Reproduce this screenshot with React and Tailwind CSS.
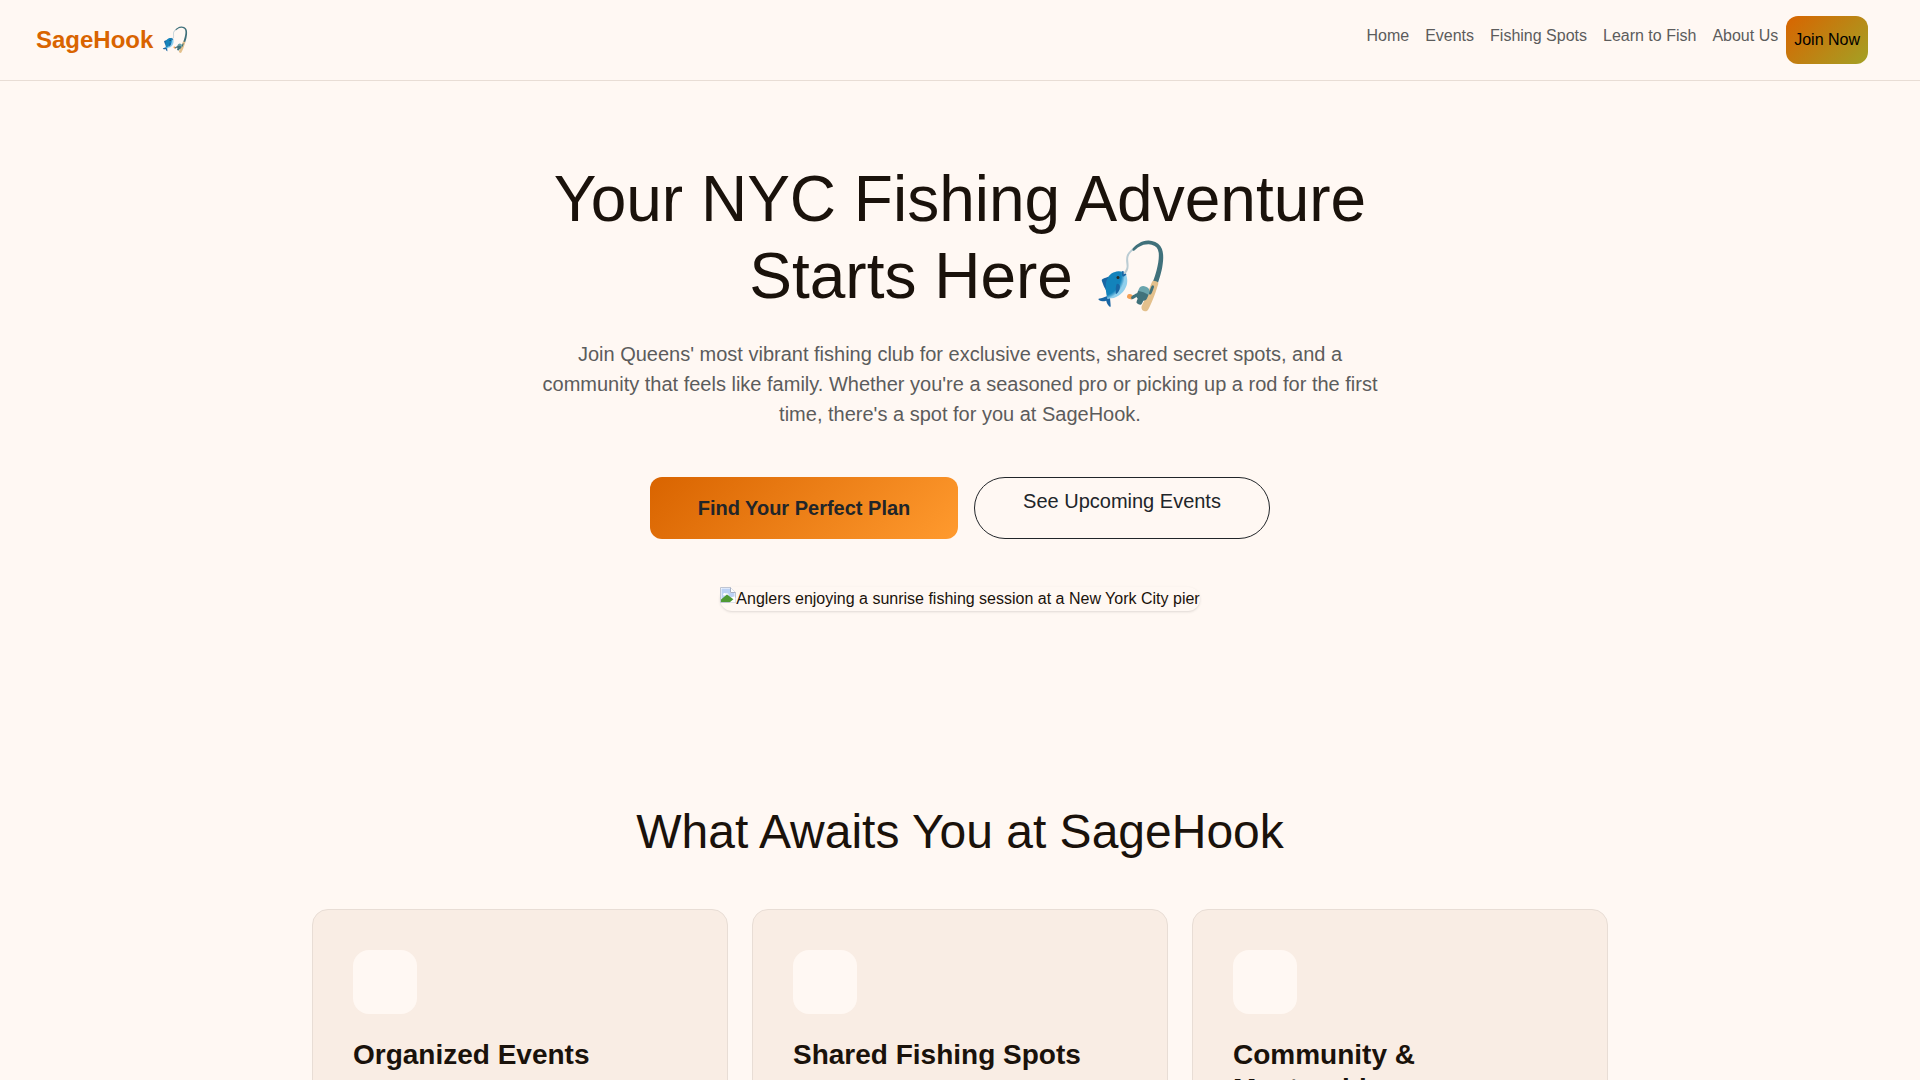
const FONT = "font-['Liberation_Sans',Arial,sans-serif]";

// chrome's broken image placeholder
function BrokenImage() {
  return (
    <svg width="16" height="16" viewBox="0 0 16 16" className="inline-block align-top">
      <path d="M0.5 0.5H10.5L15.5 5.5V15.5H0.5Z" fill="#fff" stroke="#bfc5d2" />
      <path d="M1.5 1.5H10V6H14.5V9.5L1.5 12Z" fill="#bcd2f5" />
      <path d="M3 7.5C3 6 5 5.5 6 6.5C7.5 6 9 7 8.5 8.5H3.5Z" fill="#fff" />
      <path d="M1 15V12.5L7 7.5L11 10.5L15 13.5V15Z" fill="#4f9a35" />
      <path d="M9.5 15.5L15.5 10.5V15.5Z" fill="#fff" />
      <path d="M10.5 0.5V5.5H15.5" fill="#fff" stroke="#a9b1c2" />
    </svg>
  );
}

const features = ["Organized Events", "Shared Fishing Spots", "Community & Mentorship"];

export default function App() {
  return (
    <div className={`${FONT} h-screen overflow-hidden bg-[#fff8f3] text-[#1a120b]`}>
      <nav className="flex items-start justify-between border-b border-[#e8ddd5] pl-9 pr-[52px] pt-4 h-[81px]">
        <div className="flex items-center h-12 text-2xl font-bold text-[#d96400]">SageHook 🎣</div>
        <ul className="flex items-start gap-4 text-base text-[#5c5c5c]">
          <li><a className="block py-2">Home</a></li>
          <li><a className="block py-2">Events</a></li>
          <li><a className="block py-2">Fishing Spots</a></li>
          <li><a className="block py-2">Learn to Fish</a></li>
          <li><a className="block py-2">About Us</a></li>
          <li className="-ml-2">
            <button className="rounded-xl bg-[linear-gradient(135deg,#d96400,#a3a125)] px-2 py-3 text-black">Join Now</button>
          </li>
        </ul>
      </nav>

      <section className="flex flex-col items-center pt-20 text-center">
        <h1 className="text-[64px] leading-[77px] font-normal">
          Your NYC Fishing Adventure
          <br />
          Starts Here 🎣
        </h1>
        <p className="mt-6 w-[850px] text-xl leading-[30px] text-[#5c5c5c]">
          Join Queens' most vibrant fishing club for exclusive events, shared secret spots, and a community that feels like family. Whether you're a seasoned pro or picking up a rod for the first time, there's a spot for you at SageHook.
        </p>
        <div className="mt-12 flex items-start gap-4">
          <button className="h-[62px] w-[308px] rounded-xl bg-[linear-gradient(135deg,#d96400,#ff9a2e)] text-xl font-bold text-[#212529]">
            Find Your Perfect Plan
          </button>
          <button className="h-[62px] w-[296px] rounded-[31px] border border-[#212529] pb-[14px] text-xl text-[#212529]">
            See Upcoming Events
          </button>
        </div>
        <div className="mt-12 w-[480px] rounded-2xl shadow-sm">
          <BrokenImage />
          <span>Anglers enjoying a sunrise fishing session at a New York City pier</span>
        </div>
      </section>

      <section className="mt-[192px] flex flex-col items-center">
        <h2 className="text-5xl leading-[58px] font-normal">What Awaits You at SageHook</h2>
        <div className="mt-12 grid w-[1296px] grid-cols-3 gap-6">
          {features.map((title) => (
            <div key={title} className="rounded-2xl border border-[#e8ddd5] bg-[#f9ede4] p-10 h-[300px]">
              <div className="h-16 w-16 rounded-2xl bg-[#fff8f3]" />
              <h3 className="mt-6 text-[28px] leading-[34px] font-bold">{title}</h3>
            </div>
          ))}
        </div>
      </section>
    </div>
  );
}
